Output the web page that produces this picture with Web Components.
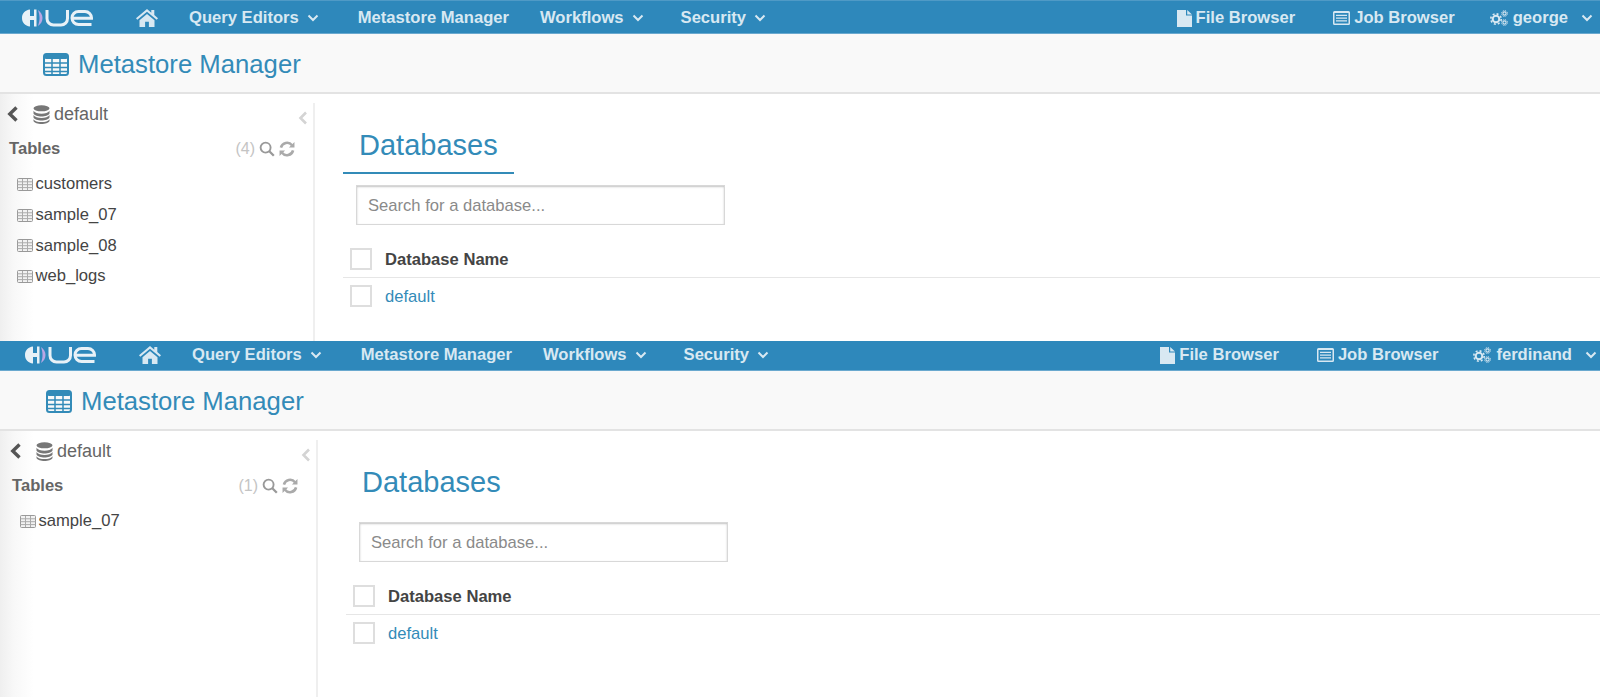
<!DOCTYPE html>
<html><head><meta charset="utf-8"><title>Metastore Manager</title>
<style>
html,body{margin:0;padding:0;background:#fff;overflow:hidden}
body{font-family:"Liberation Sans",Arial,sans-serif;color:#444;width:1600px;height:697px}
</style></head><body>
<template id="t-nav">
<style>
:host{display:flex;align-items:center;height:var(--nav-h,30px);background:#2e88bb;color:#d8e8f2;font:bold 16.6px/20px "Liberation Sans",Arial,sans-serif;padding:var(--nav-pt,3px) var(--nav-r,7px) var(--nav-pb,0) var(--off,0);box-sizing:content-box;border-bottom:1px solid #6aa9cf;box-shadow:inset 0 1px 0 var(--nav-top,#4f9ac6)}
.logo{margin-left:21px;width:72px;height:18px;flex:none}
.home{margin-left:43px;width:22px;height:20px;flex:none}
.i{display:flex;align-items:center;white-space:nowrap}
.q{margin-left:31px}.m{margin-left:39px}.w{margin-left:31px}.s{margin-left:37px}
.sp{flex:1}
.c{margin-left:8px;width:12px;height:8px;flex:none}
.ic{margin-right:4px;flex:none}
.job{margin-left:38px}.user{margin-left:35px}.user .c{margin-left:13px}
</style>
<svg class="logo" viewBox="0 0 72 18">
<path fill="#e8f1f7" d="M9 .5C4 1 1 4.500 1 9s3 8 8 8.500V11h4v6.500h2.500V.5H13V7H9z"/>
<path fill="#b9a6e4" d="M17 1c3 2 4.500 5 4.500 8s-1.500 6-4.500 8c1-3 1.500-5.500 1.500-8S18 4 17 1z"/>
<g fill="none" stroke="#e8f1f7" stroke-width="3">
<path d="M26 1v8.500A6.500 6.500 0 0 0 32.500 16h7.500a6.500 6.500 0 0 0 6.500-6.500V1"/>
<path d="M70.500 15.500H57.500a6.500 6.500 0 0 1 0-13h6.500a6.500 6.500 0 0 1 6.500 6.700H51.500"/></g></svg>
<svg class="home" viewBox="0 0 22 20"><path fill="#d8e8f2" d="M11 1 0 10.200l1.300 1.600L11 3.700l9.700 8.100 1.300-1.600-3.700-3.100V2h-3v2.700zM3.500 12.300V19h5.600v-5.200h3.800V19h5.600v-6.700L11 6z"/></svg>
<span class="i q">Query Editors<svg class="c" viewBox="0 0 12 8"><path d="M1.500 1.500 6 6l4.500-4.500" fill="none" stroke="#d8e8f2" stroke-width="2"/></svg></span>
<span class="i m">Metastore Manager</span>
<span class="i w">Workflows<svg class="c" viewBox="0 0 12 8"><path d="M1.500 1.500 6 6l4.500-4.500" fill="none" stroke="#d8e8f2" stroke-width="2"/></svg></span>
<span class="i s">Security<svg class="c" viewBox="0 0 12 8"><path d="M1.500 1.500 6 6l4.500-4.500" fill="none" stroke="#d8e8f2" stroke-width="2"/></svg></span>
<span class="sp"></span>
<span class="i"><svg class="ic" width="15" height="17" viewBox="0 0 15 17"><path fill="#d8e8f2" d="M0 0h9v5.500h6V17H0zM10.200 0 15 4.400h-4.800z"/></svg>File Browser</span>
<span class="i job"><svg class="ic" width="17" height="14" viewBox="0 0 17 14"><path fill-rule="evenodd" fill="#d8e8f2" d="M1.500 0h14A1.500 1.500 0 0 1 17 1.500v11a1.500 1.500 0 0 1-1.500 1.500h-14A1.500 1.500 0 0 1 0 12.500v-11A1.500 1.500 0 0 1 1.500 0zM1.500 2v10.500h14V2zM3 3.800h11v1.300H3zM3 6.500h11v1.300H3zM3 9.200h11v1.300H3z"/></svg>Job Browser</span>
<span class="i user"><svg class="ic" width="18" height="16" viewBox="0 0 18 16"><g fill="none" stroke="#d8e8f2"><circle cx="6" cy="9" r="3.300" stroke-width="2"/><circle cx="6" cy="9" r="5.200" stroke-width="1.600" stroke-dasharray="2 2.080"/><circle cx="14.500" cy="3.500" r="1.600" stroke-width="1.100"/><circle cx="14.500" cy="3.500" r="2.900" stroke-width="1" stroke-dasharray="1.200 1.080"/><circle cx="14.500" cy="12.500" r="1.600" stroke-width="1.100"/><circle cx="14.500" cy="12.500" r="2.900" stroke-width="1" stroke-dasharray="1.200 1.080"/></g></svg><span id="u" style="margin-left:1px"></span><svg class="c" viewBox="0 0 12 8"><path d="M1.500 1.500 6 6l4.500-4.500" fill="none" stroke="#d8e8f2" stroke-width="2"/></svg></span>
</template>

<template id="t-head">
<style>
:host{display:flex;align-items:center;height:56px;padding-top:2px;background:#f9f9f9;border-bottom:2px solid #e3e3e3;padding-left:calc(43px + var(--off,0px));color:#338bb8;font:25.7px/30px "Liberation Sans",Arial,sans-serif}
svg{margin-right:9px;flex:none;margin-top:1px}
</style>
<svg width="26" height="23" viewBox="0 0 26 23"><rect x="1" y="1" width="24" height="21" rx="2.500" fill="none" stroke="#338bb8" stroke-width="2"/><path d="M1 10h24M1 14.500h24M1 18.500h24M9 5v17M17 5v17" stroke="#338bb8" stroke-width="1.500"/><rect x="1" y="1" width="24" height="5" rx="2" fill="#338bb8"/></svg>
<slot></slot>
</template>

<template id="t-side">
<style>
:host{display:block;box-sizing:border-box;width:calc(315px + var(--off,0px));padding-left:var(--off,0);background:linear-gradient(90deg,#efefef 0,#f8f8f8 14px,#fff 34px);position:relative;font-family:"Liberation Sans",Arial,sans-serif;font-size:16.6px}
.box{box-sizing:border-box;border-right:2px solid #efefef;margin-top:9px;padding-left:7px;height:calc(100% - 9px)}
.db{display:flex;align-items:center;height:22px;color:#666;font-size:18px}
.db .bk{margin-right:15px}.db .cyl{margin-right:4px}
.col{position:absolute;top:17px;right:7px}
.tb{display:flex;align-items:center;height:20px;margin-top:14px;padding-left:2px;padding-right:18px;color:#666;font-weight:bold}
.tb .sp{flex:1}.cnt{color:#c4c4c4;font-weight:normal;font-size:16px;margin-right:4px}
.tb svg{margin-right:4px}
ul{list-style:none;margin:10px 0 0;padding:0 0 0 10px;color:#444}
li{display:flex;align-items:center;height:30.700px}
li svg{margin-right:2.500px;flex:none}
</style>
<div class="box">
<div class="db"><svg class="bk" width="11" height="16" viewBox="0 0 11 16"><path d="M9.500 1.500 2.800 8l6.700 6.500" fill="none" stroke="#555" stroke-width="3.400"/></svg><svg class="cyl" width="17" height="19" viewBox="0 0 17 19"><g fill="#777"><ellipse cx="8.500" cy="3.300" rx="8" ry="3"/><path d="M.5 5.800c1 2 4.500 3 8 3s7-1 8-3v2.700c-.8 2-4.500 3-8 3s-7.200-1-8-3zM.5 10c1 2 4.500 3 8 3s7-1 8-3v2.500c-.8 2-4.500 3-8 3s-7.200-1-8-3zM.5 14.200c1 2 4.500 2.800 8 2.800s7-.8 8-2.800V16c-.8 2-4.500 3-8 3s-7.200-1-8-3z"/></g></svg>default</div>
<svg class="col" width="10" height="14" viewBox="0 0 10 14"><path d="M8 1.500 2.500 7 8 12.500" fill="none" stroke="#d4d4d4" stroke-width="2.600"/></svg>
<div class="tb">Tables<span class="sp"></span><span class="cnt" id="cnt"></span><svg width="16" height="16" viewBox="0 0 16 16"><circle cx="6.600" cy="6.600" r="5" fill="none" stroke="#999" stroke-width="1.900"/><path d="m10.300 10.300 4.500 4.500" stroke="#999" stroke-width="2.300"/></svg><svg style="margin:0" width="16" height="16" viewBox="0 0 15 15"><g fill="none" stroke="#aaa" stroke-width="2.400"><path d="M1.800 6.200A5.900 5.900 0 0 1 12.200 4"/><path d="M13.200 8.800A5.900 5.900 0 0 1 2.800 11"/></g><path fill="#aaa" d="M14.500 1v5.200H9.300zM.5 14V8.800h5.200z"/></svg></div>
<ul id="list"></ul>
</div>
</template>

<template id="t-db">
<style>
:host{display:block;flex:1;min-width:0;padding:33px 0 0 28px;font-family:"Liberation Sans",Arial,sans-serif;font-size:16.6px;color:#444}
h1{margin:0;display:block;box-sizing:border-box;width:171px;height:47px;padding-left:16px;font:normal 29px/36px "Liberation Sans",Arial,sans-serif;color:#338bb8;border-bottom:var(--tab-b,2px solid #338bb8)}
.search{display:block;box-sizing:border-box;margin:11px 0 0 13px;width:369px;height:40px;border:1px solid #d8d8d8;box-shadow:inset 0 1px 2px #c4c4c4;padding:0 11px;line-height:40px;color:#8a8a8a;background:#fff}
.row{display:flex;align-items:center;padding-left:7px;height:36px}
.head{margin-top:15px;height:37px;font-weight:bold;border-bottom:1px solid #e6e6e6}
.cb{box-sizing:border-box;width:22px;height:22px;border:2px solid #dedede;background:#fff;margin-right:13px;flex:none}
.t{padding-top:2px}
a{color:#338bb8}
</style>
<h1>Databases</h1>
<div class="search">Search for a database...</div>
<div class="row head"><span class="cb"></span><span class="t">Database Name</span></div>
<div class="row"><span class="cb"></span><a class="t">default</a></div>
</template>

<hue-panel user="george" tables="customers,sample_07,sample_08,web_logs" style="height:341px"></hue-panel>
<hue-panel second user="ferdinand" tables="sample_07" style="height:356px"></hue-panel>

<script>
const mount=(el,id)=>{const r=el.attachShadow({mode:'open'});r.appendChild(document.getElementById(id).content.cloneNode(true));return r};
customElements.define('hue-nav',class extends HTMLElement{connectedCallback(){const r=mount(this,'t-nav');r.getElementById('u').textContent=this.getAttribute('user')}});
customElements.define('hue-head',class extends HTMLElement{connectedCallback(){mount(this,'t-head')}});
customElements.define('hue-side',class extends HTMLElement{connectedCallback(){const r=mount(this,'t-side');const t=this.getAttribute('tables').split(',');r.getElementById('cnt').textContent='('+t.length+')';
const ic='<svg width="16" height="13" viewBox="0 0 16 13"><rect x=".5" y=".5" width="15" height="12" rx="1" fill="#f2f2f2" stroke="#999"/><path d="M.5 3.800h15M.5 6.700h15M.5 9.600h15M5.500 1v11M10.500 1v11" stroke="#aaa" fill="none"/></svg>';
const u=r.getElementById('list');t.forEach(n=>{const l=document.createElement('li');l.innerHTML=ic;l.append(n);u.appendChild(l)})}});
customElements.define('hue-db',class extends HTMLElement{connectedCallback(){mount(this,'t-db')}});
customElements.define('hue-panel',class extends HTMLElement{connectedCallback(){const r=this.attachShadow({mode:'open'});const s=this.hasAttribute('second');
r.innerHTML=`<style>:host{display:flex;flex-direction:column;--off:${s?'3px':'0px'};--nav-h:${s?'28px':'30px'};--nav-pt:${s?'0px':'3px'};--nav-pb:${s?'1px':'0px'};--nav-r:${s?'3px':'7px'};--nav-top:${s?'#2e88bb':'#4f9ac6'};--tab-b:${s?'2px solid transparent':'2px solid #338bb8'}}.b{display:flex;flex:1;min-height:0}</style>
<hue-nav user="${this.getAttribute('user')}"></hue-nav><hue-head>Metastore Manager</hue-head><div class="b"><hue-side tables="${this.getAttribute('tables')}"></hue-side><hue-db></hue-db></div>`}});
</script>
</body></html>
